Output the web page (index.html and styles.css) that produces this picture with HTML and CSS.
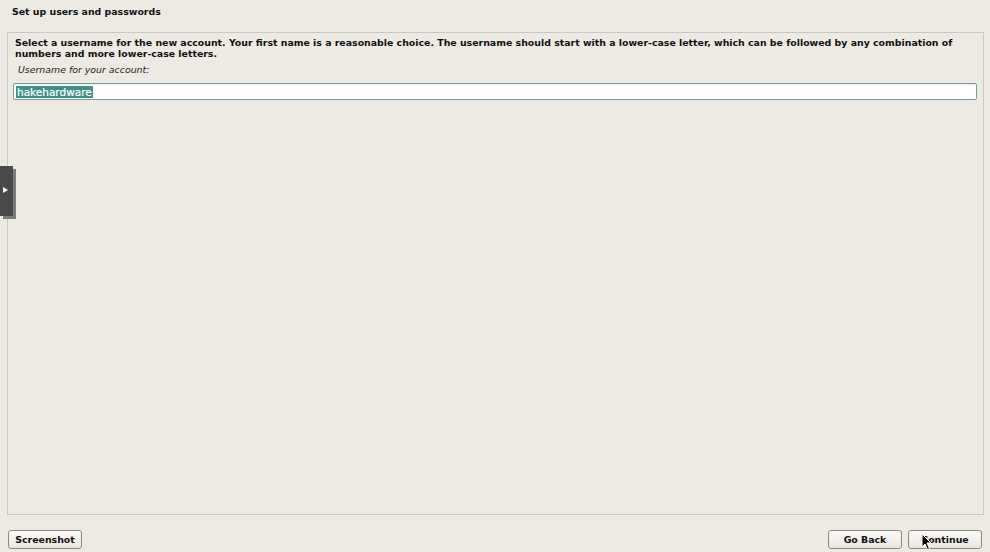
FILE: index.html
```html
<!DOCTYPE html>
<html>
<head>
<meta charset="utf-8">
<link rel="stylesheet" href="styles.css">
</head>
<body>
<div class="app">
  <div class="title">Set up users and passwords</div>
  <div class="panel">
    <p class="desc">Select a username for the new account. Your first name is a reasonable choice. The username should start with a lower-case letter, which can be followed by any combination of numbers and more lower-case letters.</p>
    <div class="label">Username for your account:</div>
    <div class="entry"><span class="sel">hakehardware</span></div>
  </div>
  <div class="footer">
    <button class="btn">Screenshot</button>
    <div class="spacer"></div>
    <button class="btn">Go Back</button>
    <button class="btn">Continue</button>
  </div>
  <div class="sidetab"><div class="tabshadow"></div><div class="tab"><span class="tri"></span></div></div>
  <svg class="cursor" width="12" height="18" viewBox="0 0 12 18"><path d="M1 1 L1 14 L4 11 L6.5 16.5 L8.5 15.5 L6 10 L10 10 Z" fill="#000" stroke="#fff" stroke-width="1"/></svg>
</div>
</body>
</html>
```
FILE: styles.css
```css
html, body { margin: 0; padding: 0; }
body {
  background: #edeae4;
  font-family: "DejaVu Sans", "Liberation Sans", sans-serif;
  color: #111;
}
.app {
  position: relative;
  width: 990px;
  height: 552px;
  display: flex;
  flex-direction: column;
}
.title {
  height: 32px;
  box-sizing: border-box;
  padding: 6px 0 0 12px;
  font-size: 9.4px;
  font-weight: bold;
  line-height: 12px;
}
.panel {
  margin: 0 6px 0 7px;
  height: 483px;
  box-sizing: border-box;
  border: 1px solid #cdc8bf;
  padding: 4px 6px 0 5px;
}
.desc {
  margin: 0 0 0 2px;
  font-size: 9.4px;
  font-weight: bold;
  line-height: 11px;
}
.label {
  margin: 5px 0 0 5px;
  font-size: 9.4px;
  font-style: italic;
  line-height: 12px;
  color: #222;
}
.entry {
  margin-top: 7px;
  height: 17px;
  box-sizing: border-box;
  border: 1px solid #74a09c;
  border-radius: 2px;
  background: #fff;
  padding: 2px 0 0 2px;
  box-shadow: inset 0 1px 1px rgba(0,0,0,0.08);
}
.sel {
  display: block;
  width: max-content;
  background: #3f8f88;
  color: #fff;
  font-size: 10.5px;
  line-height: 12px;
  height: 12px;
  padding: 0 1px;
  -webkit-text-stroke: 0.2px #fff;
}
.footer {
  display: flex;
  align-items: flex-start;
  gap: 6px;
  padding: 15px 8px 0 8px;
}
.spacer { flex: 1; }
.btn {
  width: 74px;
  height: 19px;
  box-sizing: border-box;
  border: 1px solid #8d877e;
  border-radius: 3px;
  background: linear-gradient(#fbfaf8, #e9e6e0);
  font-family: "DejaVu Sans", "Liberation Sans", sans-serif;
  font-size: 9.4px;
  font-weight: bold;
  color: #111;
  padding: 0;
  line-height: 16px;
}
.sidetab {
  position: absolute;
  left: 0;
  top: 166px;
  width: 16px;
  height: 53px;
}
.tabshadow {
  position: absolute;
  left: 3px;
  top: 3px;
  width: 13px;
  height: 50px;
  background: #7b7a76;
}
.tab {
  position: absolute;
  left: 0;
  top: 0;
  width: 13px;
  height: 50px;
  background: #4a4a4a;
}
.tri {
  position: absolute;
  left: 3px;
  top: 21px;
  width: 0;
  height: 0;
  border-top: 3.5px solid transparent;
  border-bottom: 3.5px solid transparent;
  border-left: 5px solid #fff;
}
.cursor {
  position: absolute;
  left: 921px;
  top: 533px;
}
```
